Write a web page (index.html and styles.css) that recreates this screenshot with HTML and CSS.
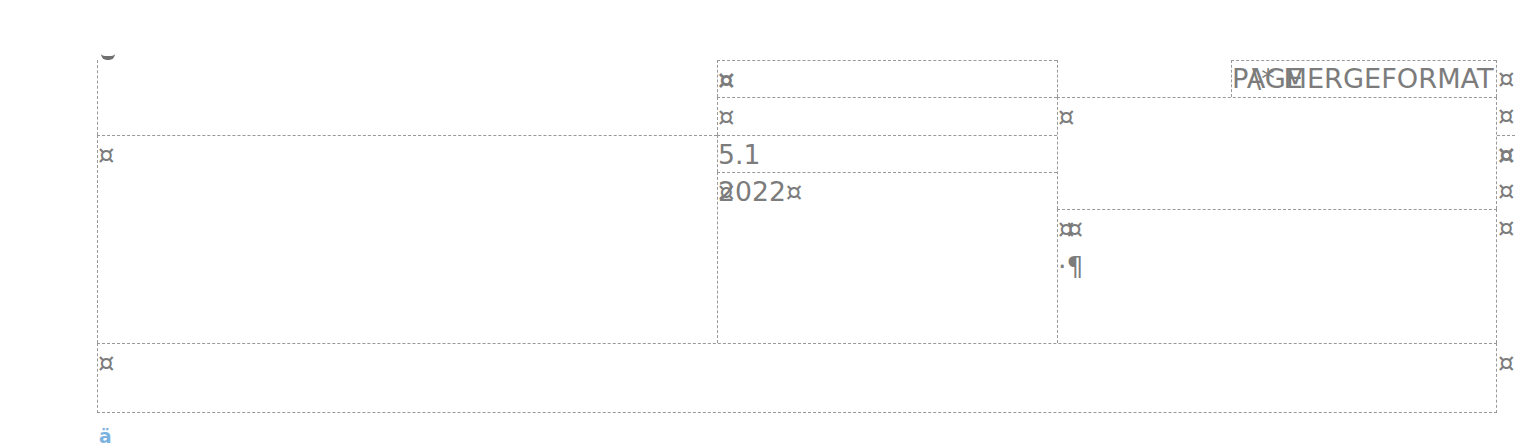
FILE: index.html
```html
<!DOCTYPE html>
<html>
<head>
<meta charset="utf-8">
<link rel="stylesheet" href="styles.css">
</head>
<body>
<div class="top"><div class="arc"></div></div>
<div class="grid">
  <div class="cell a"></div>
  <div class="cell b"><span class="m">¤</span></div>
  <div class="cell m1"><span class="m bold">¤</span></div>
  <div class="cell m2"><span class="m">¤</span></div>
  <div class="cell m3">5.1</div>
  <div class="cell m4"><span class="ov">¤</span>2022<span class="m">¤</span></div>
  <div class="cell r1"><div class="pagebox"><span class="pg">PAGE</span><span class="mf">\* MERGEFORMAT</span></div></div>
  <div class="cell r2"><span class="m">¤</span></div>
  <div class="cell r3"><div><span class="m dbl">¤¤</span></div><div class="para">·¶</div></div>
  <div class="cell bot"><span class="m">¤</span></div>
  <div class="mk k1"><span class="m">¤</span></div>
  <div class="mk k2"><span class="m">¤</span></div>
  <div class="mk k3"><span class="m bold">¤</span></div>
  <div class="mk k4"><span class="m">¤</span></div>
  <div class="mk k5"><span class="m">¤</span></div>
  <div class="mk k6"><span class="m">¤</span></div>
</div>
<div class="after">ä</div>
</body>
</html>
```
FILE: styles.css
```css
html, body {
  margin: 0;
  padding: 0;
  background: #ffffff;
}
body {
  font-family: "DejaVu Sans", sans-serif;
  color: #7c7c7c;
  font-size: 26.67px;
}
.top {
  height: 60px;
  position: relative;
}
.arc {
  position: absolute;
  left: 101px;
  top: 54px;
  width: 14px;
  height: 2px;
  border-bottom: 4px solid #707070;
  border-radius: 0 0 8px 8px;
}
.grid {
  margin-left: 97px;
  display: grid;
  grid-template-columns: 620px 340px 440px 30px;
  grid-template-rows: 37px 38px 37px 37px 134px 70px;
  width: 1430px;
}
.cell {
  box-sizing: border-box;
  line-height: 37px;
  white-space: nowrap;
  overflow: visible;
}
.a { grid-column: 1; grid-row: 1 / 3; border-left: 1px dashed #999999; }
.b { grid-column: 1; grid-row: 3 / 6; border-left: 1px dashed #999999; border-top: 1px dashed #999999; }
.m1 { grid-column: 2; grid-row: 1; border-left: 1px dashed #999999; border-top: 1px dashed #999999; }
.m2 { grid-column: 2; grid-row: 2; border-left: 1px dashed #999999; border-top: 1px dashed #999999; }
.m3 { grid-column: 2; grid-row: 3; border-left: 1px dashed #999999; border-top: 1px dashed #999999; }
.m4 { grid-column: 2; grid-row: 4 / 6; border-left: 1px dashed #999999; border-top: 1px dashed #999999; }
.r1 {
  grid-column: 3; grid-row: 1;
  border-left: 1px dashed #999999;
  border-right: 1px dashed #999999;
  display: flex;
  justify-content: flex-end;
}
.r2 { grid-column: 3; grid-row: 2 / 5; border-left: 1px dashed #999999; border-right: 1px dashed #999999; border-top: 1px dashed #999999; }
.r3 { grid-column: 3; grid-row: 5; border-left: 1px dashed #999999; border-right: 1px dashed #999999; border-top: 1px dashed #999999; }
.bot {
  grid-column: 1 / 4; grid-row: 6;
  border: 1px dashed #999999;
}
.pagebox {
  box-sizing: border-box;
  width: 265px;
  height: 37px;
  border-top: 1px dashed #999999;
  border-left: 1px dashed #999999;
  line-height: 36px;
  white-space: nowrap;
  font-size: 27.2px;
}
.pg { display: inline-block; }
.mf { display: inline-block; margin-left: -51px; }
.m { font-size: 26px; }
.bold { font-weight: bold; }
.dbl { letter-spacing: -8px; }
.para { font-size: 26.67px; }
.ov { display: inline-block; width: 0; font-size: 26px; }
.mk {
  box-sizing: border-box;
  line-height: 37px;
  padding-left: 1px;
  white-space: nowrap;
}
.k1 { grid-column: 4; grid-row: 1; }
.k2 { grid-column: 4; grid-row: 2; }
.k3 { grid-column: 4; grid-row: 3; width: 18px; border-top: 1px dashed #999999; }
.k4 { grid-column: 4; grid-row: 4; }
.k5 { grid-column: 4; grid-row: 5; }
.k6 { grid-column: 4; grid-row: 6; padding-top: 1px; }
.after {
  margin-left: 99px;
  padding-top: 13px;
  font-size: 18.7px;
  font-weight: bold;
  color: #7cb2de;
  line-height: normal;
}
```
